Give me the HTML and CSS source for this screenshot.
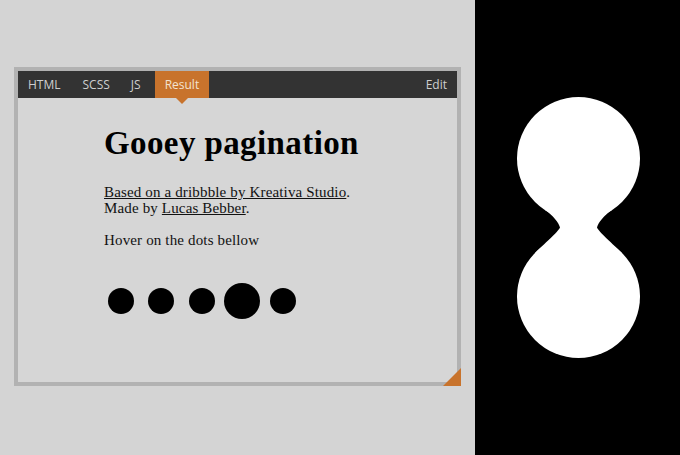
FILE: index.html
```html
<!DOCTYPE html>
<html>
<head>
<meta charset="utf-8">
<link rel="stylesheet" href="styles.css">
</head>
<body>
<div class="page">
  <div class="left">
    <div class="frame">
      <div class="tabs">
        <span class="tab">HTML</span>
        <span class="tab">SCSS</span>
        <span class="tab">JS</span>
        <span class="tab active">Result</span>
        <span class="spacer"></span>
        <span class="tab edit">Edit</span>
      </div>
      <div class="content">
        <h1 class="title">Gooey pagination</h1>
        <p class="credits"><a>Based on a dribbble by Kreativa Studio</a>.<br>Made by <a>Lucas Bebber</a>.</p>
        <p class="hint">Hover on the dots bellow</p>
        <div class="dots">
          <span class="dot"></span>
          <span class="dot"></span>
          <span class="dot"></span>
          <span class="dot big"></span>
          <span class="dot"></span>
        </div>
      </div>
      <span class="corner"></span>
    </div>
  </div>
  <div class="right">
    <svg class="goo" width="205" height="455" viewBox="475 0 205 455">
      <g fill="#fff">
        <circle cx="578.5" cy="158.5" r="61.5"/>
        <circle cx="578.5" cy="296.5" r="61.5"/>
        <path d="M545 210 C552.7 215 559 223 560 227.5 C558 232 543.7 244.3 535 253 L622 253 C613.3 244.3 599 232 597 227.5 C598 223 604.3 215 612 210 Z"/>
      </g>
    </svg>
  </div>
</div>
</body>
</html>
```
FILE: styles.css
```css
html, body {
  margin: 0;
  padding: 0;
}
body {
  width: 680px;
  height: 455px;
  overflow: hidden;
}
.page {
  display: flex;
  width: 680px;
  height: 455px;
}
.left {
  width: 475px;
  background: #d4d4d4;
  padding: 67px 0 0 14px;
  box-sizing: border-box;
}
.right {
  width: 205px;
  background: #000;
}
.goo {
  display: block;
}
.frame {
  position: relative;
  width: 447px;
  height: 319px;
  box-sizing: border-box;
  border: 4px solid #b2b2b2;
  background: #d6d6d6;
  display: flex;
  flex-direction: column;
}
.tabs {
  height: 27px;
  background: #333333;
  display: flex;
  align-items: stretch;
  font-family: "Open Sans", "DejaVu Sans", sans-serif;
  font-size: 12px;
  color: #cfcfcf;
}
.tab {
  display: flex;
  align-items: center;
  padding: 0 10px;
}
.tab:first-child {
  margin-right: 2px;
}
.tab:nth-child(3) {
  padding-left: 11px;
}
.tab.active {
  position: relative;
  background: #c8732c;
  color: #f3e2d0;
  padding: 0 10px;
  margin-left: 4px;
}
.tab.active::after {
  content: "";
  position: absolute;
  left: 50%;
  bottom: -6px;
  margin-left: -6px;
  border-left: 6px solid transparent;
  border-right: 6px solid transparent;
  border-top: 6px solid #c8732c;
}
.spacer {
  flex: 1;
}
.content {
  padding: 0 0 0 86px;
  font-family: "Liberation Serif", "Times New Roman", serif;
  color: #111;
}
.title {
  margin: 27px 0 0 0;
  font-size: 33px;
  line-height: 36px;
  letter-spacing: 0.4px;
  font-weight: bold;
  color: #000;
}
.credits {
  margin: 23px 0 0 0;
  font-size: 15px;
  line-height: 16px;
  letter-spacing: 0.15px;
}
.credits a {
  text-decoration: underline;
}
.hint {
  margin: 16px 0 0 0;
  font-size: 15px;
  line-height: 16px;
  letter-spacing: 0.15px;
}
.dots {
  display: flex;
  align-items: center;
  margin: 35px 0 0 4px;
  gap: 14px;
  height: 36px;
}
.dot {
  width: 26px;
  height: 26px;
  border-radius: 50%;
  background: #000;
}
.dot:nth-child(3) {
  margin-left: 1px;
}
.dot.big {
  width: 36px;
  height: 36px;
  margin: 0 -4px 0 -5px;
}
.corner {
  position: absolute;
  right: -4px;
  bottom: -4px;
  width: 0;
  height: 0;
  border-left: 18px solid transparent;
  border-bottom: 18px solid #c8732c;
}
```
